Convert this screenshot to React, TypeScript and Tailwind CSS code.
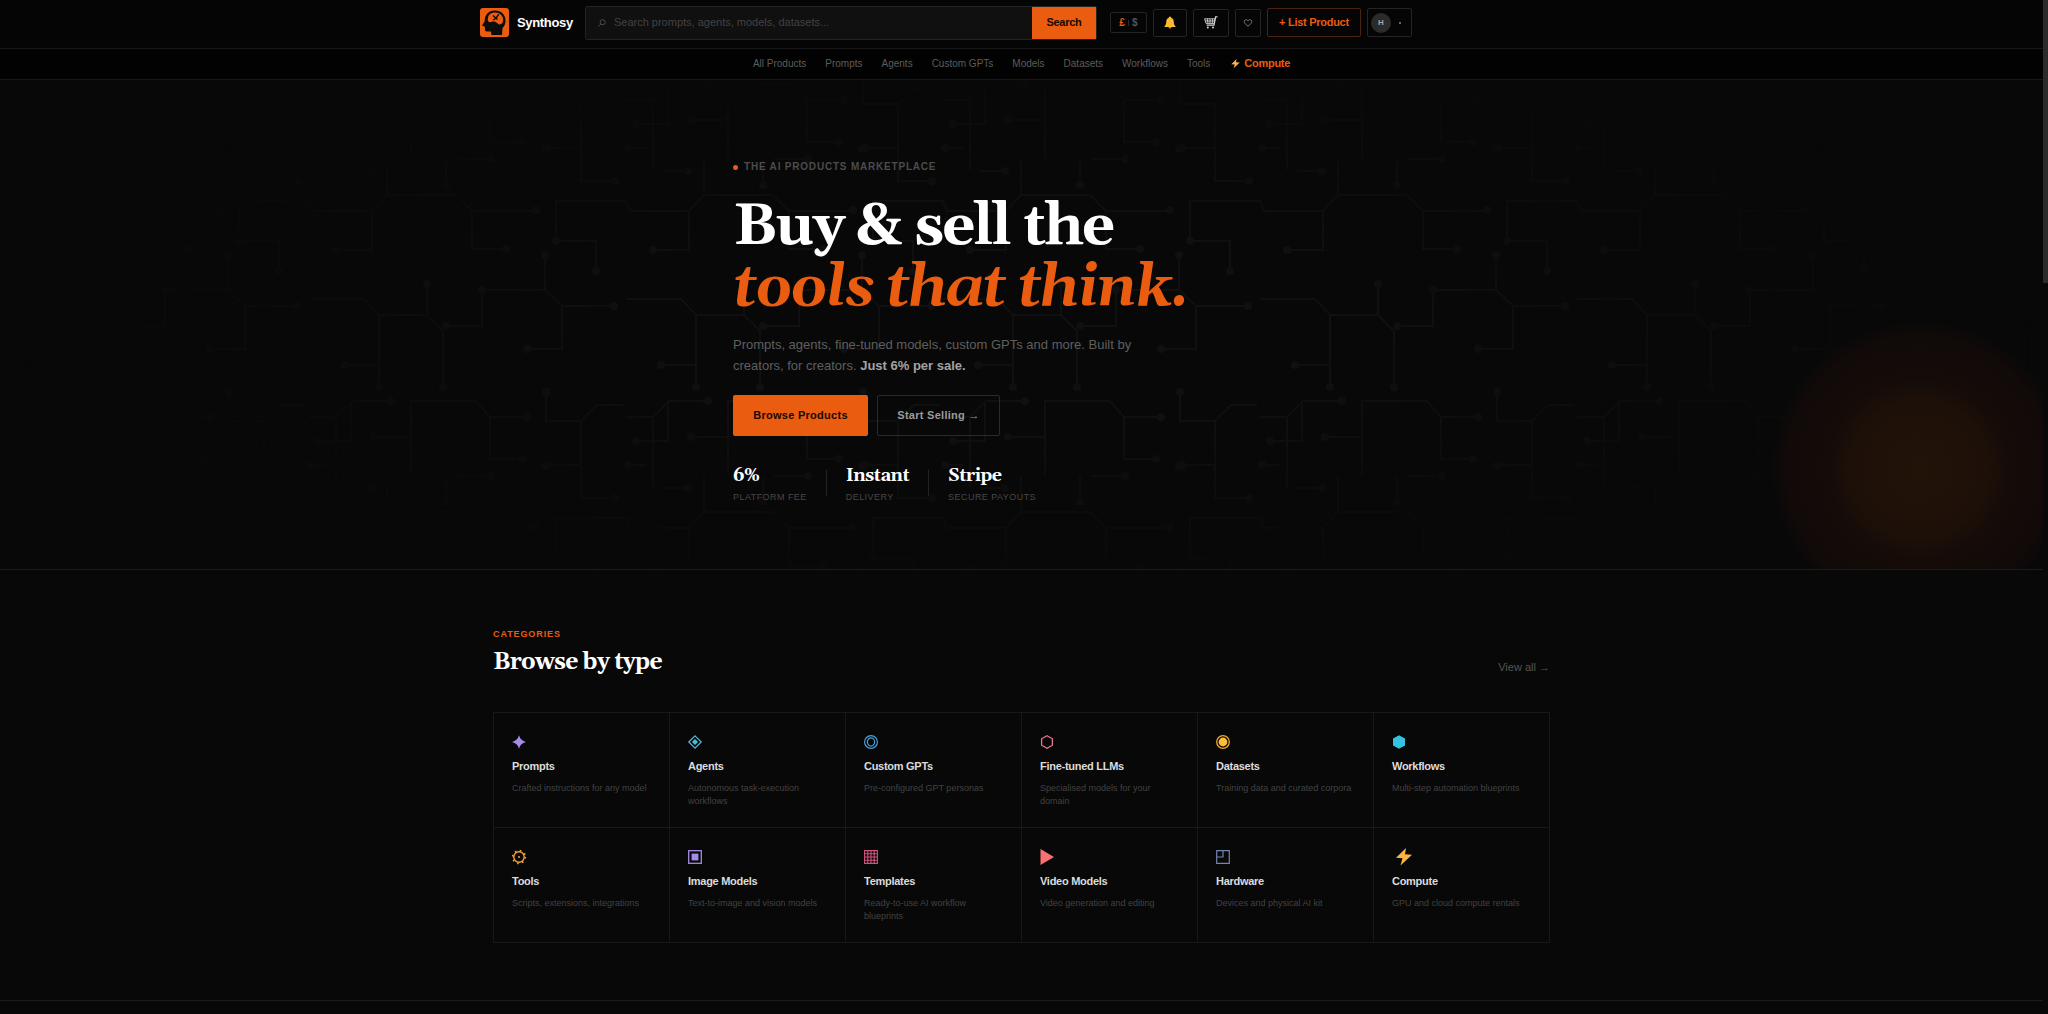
import React, { useState } from 'react';

type Category = {
  name: string;
  description: string;
  icon: React.ReactNode;
};

const navLinks = [
  'All Products',
  'Prompts',
  'Agents',
  'Custom GPTs',
  'Models',
  'Datasets',
  'Workflows',
  'Tools',
];

const stats = [
  { value: '6%', label: 'Platform fee' },
  { value: 'Instant', label: 'Delivery' },
  { value: 'Stripe', label: 'Secure payouts' },
];

const boltPath = 'M10.5 0 L0.5 9.8 L7 10.2 L5 17.5 L16.5 6.8 L9.5 6.3 Z';

const categories: Category[] = [
  {
    name: 'Prompts',
    description: 'Crafted instructions for any model',
    icon: <path d="M7 0.3 Q8.4 5.6 14 7 Q8.4 8.4 7 13.7 Q5.6 8.4 0 7 Q5.6 5.6 7 0.3Z" fill="#a78bea" />,
  },
  {
    name: 'Agents',
    description: 'Autonomous task-execution workflows',
    icon: (
      <>
        <path d="M7 0.8 L13.2 7 L7 13.2 L0.8 7Z" fill="none" stroke="#5bb8dc" strokeWidth="1.2" />
        <path d="M7 4 L10 7 L7 10 L4 7Z" fill="#45c3d6" />
      </>
    ),
  },
  {
    name: 'Custom GPTs',
    description: 'Pre-configured GPT personas',
    icon: (
      <g fill="none" stroke="#4a9fd8" strokeWidth="1.2">
        <circle cx="7" cy="7" r="6.4" />
        <ellipse cx="7" cy="7" rx="3.6" ry="4.2" />
      </g>
    ),
  },
  {
    name: 'Fine-tuned LLMs',
    description: 'Specialised models for your domain',
    icon: (
      <path
        d="M7 0.8 L12.4 3.8 V10.2 L7 13.2 L1.6 10.2 V3.8Z"
        fill="none"
        stroke="#e8788e"
        strokeWidth="1.3"
      />
    ),
  },
  {
    name: 'Datasets',
    description: 'Training data and curated corpora',
    icon: (
      <>
        <circle cx="7" cy="7" r="6.3" fill="none" stroke="#f5a72f" strokeWidth="1.3" />
        <circle cx="7" cy="7" r="4.4" fill="#fbbf3c" />
      </>
    ),
  },
  {
    name: 'Workflows',
    description: 'Multi-step automation blueprints',
    icon: <path d="M7 0.2 L13 3.6 V10.4 L7 13.8 L1 10.4 V3.6Z" fill="#33c3e0" />,
  },
  {
    name: 'Tools',
    description: 'Scripts, extensions, integrations',
    icon: (
      <g fill="none" stroke="#f5a43a">
        <circle cx="7" cy="7" r="5.2" strokeWidth="1.4" />
        <circle cx="7" cy="7" r="6.4" strokeWidth="1.6" strokeDasharray="1.6 3.43" />
        <circle cx="7" cy="7" r="1" fill="#f5a43a" stroke="none" />
      </g>
    ),
  },
  {
    name: 'Image Models',
    description: 'Text-to-image and vision models',
    icon: (
      <>
        <rect x="0.7" y="0.7" width="12.6" height="12.6" fill="none" stroke="#a48be6" strokeWidth="1.3" />
        <rect x="3.6" y="3.6" width="6.8" height="6.8" fill="#a78bea" />
      </>
    ),
  },
  {
    name: 'Templates',
    description: 'Ready-to-use AI workflow blueprints',
    icon: (
      <path
        d="M0.6 0.6H13.4V13.4H0.6Z M3.8 0.6V13.4 M7 0.6V13.4 M10.2 0.6V13.4 M0.6 3.8H13.4 M0.6 7H13.4 M0.6 10.2H13.4"
        fill="none"
        stroke="#d4527e"
        strokeWidth="1.1"
      />
    ),
  },
  {
    name: 'Video Models',
    description: 'Video generation and editing',
    icon: <path d="M0.5 -1 L14 7 L0.5 15Z" fill="#f87171" />,
  },
  {
    name: 'Hardware',
    description: 'Devices and physical AI kit',
    icon: (
      <path
        d="M0.7 0.7H13.3V13.3H0.7Z M7 0.7V7H0.7"
        fill="none"
        stroke="#7286ab"
        strokeWidth="1.2"
      />
    ),
  },
  {
    name: 'Compute',
    description: 'GPU and cloud compute rentals',
    icon: <path d={boltPath} transform="translate(3.5 -2)" fill="#fbb540" />,
  },
];

// one 317x317 tile of circuit traces
const tracePath = [
  'M10 46V6H80L84 16H143V55H107',
  'M143 16L158 0H227L243 16H307',
  'M243 16V54H277',
  'M158 0V-35',
  'M10 46H50V76',
  'M316 60V95L333 111H385',
  'M333 111V154H298',
  'M316 95H253V131H217',
  'M198 89V120L214 136V192',
  'M80 104H135L150 120H198',
  'M150 120V192M115 170H150',
  'M317 197V226H352L368 210H394',
  'M35 226V303H69M2 270H35',
  'M80 222H107L123 206H162',
  'M107 222V292M122 208V246H90',
  'M182 280V206H247L261 222H298',
  'M261 222V264H293M145 242H182',
  'M82 270H100M117 293H142',
  'M217 307V282M228 281H262',
].join('');

const traceNodes = [
  [10, 46], [50, 76], [107, 55], [307, 15], [277, 54], [316, 60], [385, 111],
  [298, 154], [253, 95], [217, 131], [198, 89], [214, 192], [150, 192],
  [115, 170], [317, 197], [69, 303], [2, 270], [162, 206], [90, 246],
  [298, 222], [293, 264], [145, 242], [82, 270], [142, 293], [217, 307],
  [262, 281], [316, 271],
];

const tileOffsets = [-1, 0, 1].flatMap((row) =>
  [-5, -4, -3, -2, -1, 0, 1, 2].map((col) => [1180 + col * 317, 115 + row * 317]),
);

function CircuitBackground() {
  return (
    <svg
      aria-hidden="true"
      className="absolute inset-0 h-full w-full [mask-image:radial-gradient(ellipse_50%_60%_at_50%_50%,black_35%,transparent_100%)]"
    >
      <defs>
        <g id="traces">
          <path d={tracePath} fill="none" stroke="#101010" strokeWidth="2" />
          {traceNodes.map(([x, y]) => (
            <circle key={`${x}-${y}`} cx={x} cy={y} r="4" fill="#101010" />
          ))}
        </g>
      </defs>
      {tileOffsets.map(([x, y]) => (
        <use key={`${x}-${y}`} href="#traces" x={x} y={y} />
      ))}
    </svg>
  );
}

function Logo() {
  return (
    <a href="#" className="flex items-center gap-2 text-[13px] font-bold tracking-tight text-white">
      <svg viewBox="0 0 29 29" className="size-[29px]" aria-hidden="true">
        <rect width="29" height="29" rx="3" fill="#ea5c10" />
        <path
          d="M15 2.5 C21 2.5 25.5 6.5 25.5 12.5 C25.5 16 24.5 18 22.5 20 L22 27 H11.5 L11 23.5 H7 C5.5 23.5 5 22.8 5 21.5 L4.8 18.8 L2 17.6 L4.6 13.5 C4.6 7 8.5 2.5 15 2.5Z"
          fill="#0b0b0b"
        />
        <path
          d="M7.8 11.5 C7.8 7 10.8 4.6 15 4.6 C20 4.6 23.2 8 23.2 11.8 C23.2 14.8 21.5 16.6 19.4 16.4 C17.8 16.2 17 14.4 15.2 13.8 C12.8 13 11 14.8 9.5 14.2 C8.3 13.8 7.8 12.8 7.8 11.5Z"
          fill="#ea5c10"
        />
        <path d="M13 7.4 L17.4 11.4 M18.8 6.2 L16 10.2 L13 12" fill="none" stroke="#0b0b0b" strokeWidth="1.3" />
      </svg>
      Synthosy
    </a>
  );
}

function Header() {
  const [query, setQuery] = useState('');

  return (
    <header className="border-b border-[#171717] bg-[#050505]">
      <div className="mx-auto flex h-12 max-w-[1083px] items-center pb-[3px]">
        <Logo />
        <form
          className="ml-3 flex h-[34px] w-[512px] items-center rounded-xs border border-[#242424] bg-[#101010]"
          onSubmit={(e) => e.preventDefault()}
        >
          <label htmlFor="search" className="pl-3">
            <svg viewBox="0 0 10 10" className="size-2" aria-label="Search">
              <circle cx="5.8" cy="4" r="3.2" fill="none" stroke="#555" strokeWidth="1.1" />
              <path d="M3.6 6.4 L0.5 9.4" stroke="#555" strokeWidth="1.1" />
            </svg>
          </label>
          <input
            id="search"
            value={query}
            onChange={(e) => setQuery(e.target.value)}
            placeholder="Search prompts, agents, models, datasets..."
            className="min-w-0 flex-1 bg-transparent px-2 text-[11px] text-white outline-none placeholder:text-[#424242]"
          />
          <button className="h-full w-16 bg-[#ea5c10] text-[11px] font-bold tracking-tight text-[#160800]">
            Search
          </button>
        </form>
        <div className="ml-[13px] flex items-center gap-[6px]">
          <button className="flex h-[21px] w-[37px] items-center justify-center gap-[3px] rounded-xs border border-[#242424] text-[10px] font-bold text-[#ea5c10]">
            £<span className="h-[6px] w-px bg-[#2c2c2c]"></span>
            <span className="text-[#555]">$</span>
          </button>
          <button aria-label="Notifications" className="flex h-7 w-[34px] items-center justify-center rounded-xs border border-[#242424]">
            <svg viewBox="0 0 12 13" className="h-[13px] w-3">
              <path d="M6 0.5 C7 0.5 7.2 1.3 7.2 1.8 C9.2 2.5 9.8 4.2 9.8 6 C9.8 8.2 10.4 9 11.5 10.3 V11 H0.5 V10.3 C1.6 9 2.2 8.2 2.2 6 C2.2 4.2 2.8 2.5 4.8 1.8 C4.8 1.3 5 0.5 6 0.5Z" fill="#fcb932" />
              <path d="M4.6 11 H7.4 C7.4 13 4.6 13 4.6 11Z" fill="#d98a1c" />
            </svg>
          </button>
          <button aria-label="Cart" className="flex h-7 w-9 items-center justify-center rounded-xs border border-[#242424]">
            <svg viewBox="0 0 14 13" className="h-[13px] w-3.5" fill="none" stroke="#d4d4d4">
              <path d="M13.5 0.8 H11.6 L10 9.2 H2.6" strokeWidth="1.2" />
              <path d="M0.6 2.8 H11 L10.2 7.4 H2Z M3.4 2.8 L4 7.4 M6 2.8 V7.4 M8.6 2.8 L8.2 7.4 M1.2 5H10.6" strokeWidth="0.9" />
              <circle cx="3.8" cy="11.4" r="1" fill="#d4d4d4" stroke="none" />
              <circle cx="9" cy="11.4" r="1" fill="#d4d4d4" stroke="none" />
            </svg>
          </button>
          <button aria-label="Wishlist" className="flex h-7 w-[26px] items-center justify-center rounded-xs border border-[#242424]">
            <svg viewBox="0 0 10 9" className="h-2 w-2.5">
              <path d="M5 8.2 C2 5.6 0.8 4.4 0.8 2.8 C0.8 0.3 4 0.2 5 2.2 C6 0.2 9.2 0.3 9.2 2.8 C9.2 4.4 8 5.6 5 8.2Z" fill="none" stroke="#8a8a8a" />
            </svg>
          </button>
          <a href="#" className="flex h-[29px] w-[94px] items-center justify-center rounded-xs border border-[#4a2411] text-[11px] font-bold tracking-tight whitespace-nowrap text-[#ea5c10]">
            + List Product
          </a>
          <button className="flex h-[29px] w-[45px] items-center gap-2 rounded-xs border border-[#242424] pl-[3px]">
            <span className="flex size-5 items-center justify-center rounded-full bg-[#2b2b2b] text-[8px] font-bold text-[#a3a3a3]">
              H
            </span>
            <span className="size-[2px] bg-[#666]"></span>
          </button>
        </div>
      </div>
    </header>
  );
}

function CategoryNav() {
  return (
    <nav className="flex h-[31px] items-center justify-center gap-[19px] border-b border-[#171717] bg-[#020202] pb-[2px] text-[10px] text-[#5c5c5c]">
      {navLinks.map((link) => (
        <a key={link} href="#">
          {link}
        </a>
      ))}
      <a href="#" className="ml-[2px] flex items-center gap-1 text-[11px] font-bold tracking-tight text-[#ea5c10]">
        <svg viewBox="0 0 17 17" className="size-[9px]" aria-hidden="true">
          <path d={boltPath} fill="#fbb540" />
        </svg>
        Compute
      </a>
    </nav>
  );
}

function Hero() {
  return (
    <section className="relative overflow-hidden border-b border-[#1c1c1c]">
      <CircuitBackground />
      <div className="absolute -right-[26px] -bottom-[50px] size-[300px] bg-[radial-gradient(circle_closest-side,#221309_0%,#1d1008_45%,#150c08_60%,#110a08_88%,transparent_100%)]"></div>
      <div className="relative mx-auto max-w-[577px] pt-20 pb-[65px]">
        <p className="flex items-center gap-[6px] text-[10px] leading-[14px] font-bold tracking-[0.08em] text-[#4c4c4c] uppercase">
          <span className="size-[5px] rounded-full bg-[#ea5c10]"></span>
          The AI Products Marketplace
        </p>
        <h1 className="mt-[23px] font-[Georgia,Gelasio,'Liberation_Serif',serif] text-[58px] leading-[61px] font-bold tracking-[-0.03em] whitespace-nowrap text-white">
          Buy &amp; sell the
          <br />
          <em className="text-[#ea5c10]">tools that think.</em>
        </h1>
        <p className="mt-[15px] max-w-[410px] text-[13px] leading-[21px] text-[#5f5f5f]">
          Prompts, agents, fine-tuned models, custom GPTs and more. Built by creators, for
          creators. <strong className="text-[#a3a3a3]">Just 6% per sale.</strong>
        </p>
        <div className="mt-[19px] flex gap-[9px] text-[11px] font-bold tracking-wide">
          <a href="#" className="flex h-[41px] w-[135px] items-center justify-center rounded-xs bg-[#ea5c10] text-[#160800]">
            Browse Products
          </a>
          <a href="#" className="flex h-[41px] w-[123px] items-center justify-center rounded-xs border border-[#2a2a2a] text-[#9b9b9b]">
            Start Selling →
          </a>
        </div>
        <dl className="mt-[29px] flex items-center">
          {stats.map((stat, i) => (
            <React.Fragment key={stat.label}>
              {i > 0 && <div className="mx-[19px] mb-1 h-[26px] w-px bg-[#242424]"></div>}
              <div className="flex flex-col-reverse gap-[3px]">
                <dt className="text-[9px] leading-[14px] tracking-wider text-[#474747] uppercase">
                  {stat.label}
                </dt>
                <dd className="font-[Georgia,Gelasio,'Liberation_Serif',serif] text-[18px] leading-[22px] font-bold tracking-[-0.03em] text-white">
                  {stat.value}
                </dd>
              </div>
            </React.Fragment>
          ))}
        </dl>
      </div>
    </section>
  );
}

function Categories() {
  return (
    <section className="border-b border-[#1c1c1c] py-[57px]">
      <div className="mx-auto max-w-[1057px]">
        <p className="text-[9px] leading-[14px] font-bold tracking-widest text-[#ea5c10] uppercase">
          Categories
        </p>
        <div className="mt-[7px] flex items-end justify-between">
          <h2 className="font-[Georgia,Gelasio,'Liberation_Serif',serif] text-[23px] leading-[30px] font-bold tracking-[-0.03em] text-white">
            Browse by type
          </h2>
          <a href="#" className="pb-[3px] text-[11px] leading-[16px] text-[#555]">
            View all →
          </a>
        </div>
        <ul className="mt-[34px] grid grid-cols-6 gap-px border border-[#181818] bg-[#181818]">
          {categories.map((category) => (
            <li key={category.name} className="min-h-[114px] bg-[#080808]">
              <a href="#" className="block px-[18px] pt-[22px]">
                <svg viewBox="0 0 14 14" className="size-3.5 overflow-visible" aria-hidden="true">
                  {category.icon}
                </svg>
                <h3 className="mt-[9px] text-[11px] leading-[16px] font-bold tracking-tight text-[#dcdcdc]">
                  {category.name}
                </h3>
                <p className="mt-2 text-[9px] leading-[13px] text-[#424242]">
                  {category.description}
                </p>
              </a>
            </li>
          ))}
        </ul>
      </div>
    </section>
  );
}

function App() {
  return (
    <div className="flex min-h-screen bg-[#080808] font-['Liberation_Sans',Arial,sans-serif]">
      <div className="min-w-0 flex-1">
        <Header />
        <CategoryNav />
        <main>
          <Hero />
          <Categories />
        </main>
      </div>
      <div className="w-[5px] bg-[#080808]" aria-hidden="true">
        <div className="h-[283px] bg-[#2c2b2a]"></div>
      </div>
    </div>
  );
}

export default App;
